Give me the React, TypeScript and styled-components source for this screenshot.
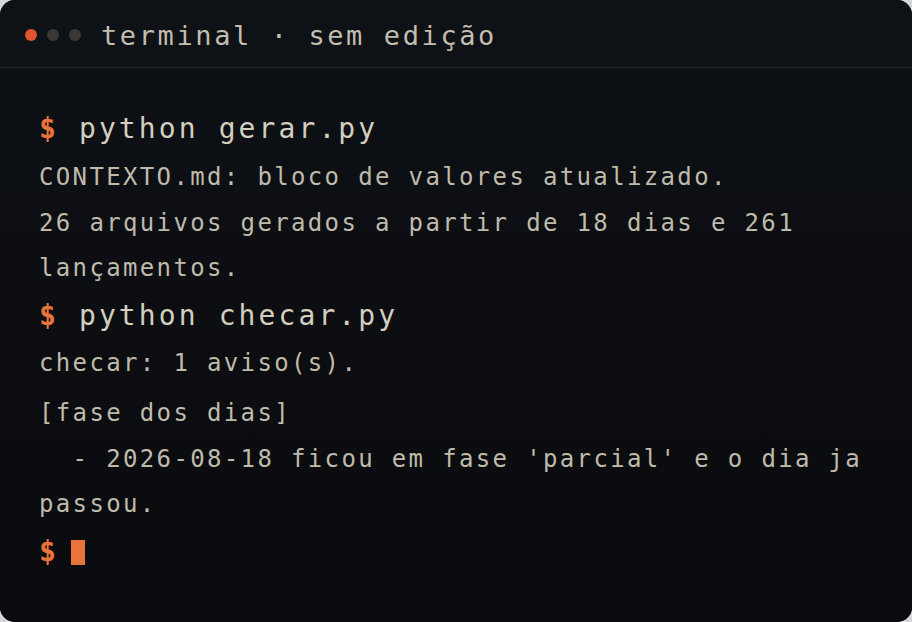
import React from "react";
import styled, { createGlobalStyle } from "styled-components";

const Global = createGlobalStyle`
  html, body { margin: 0; padding: 0; background: #d6d6d6; }
  body { width: 912px; height: 622px; overflow: hidden; }
  #root { width: 912px; height: 622px; }
`;

const Window = styled.div`
  width: 912px;
  height: 622px;
  box-sizing: border-box;
  border-radius: 15px;
  overflow: hidden;
  background: #0b0d11;
  display: flex;
  flex-direction: column;
  font-family: "DejaVu Sans Mono", "Liberation Mono", monospace;
`;

const TitleBar = styled.div`
  height: 68px;
  flex: 0 0 68px;
  box-sizing: border-box;
  display: flex;
  align-items: center;
  padding-left: 25px;
  background: #0e1115;
  border-bottom: 1px solid #22262b;
`;

const Dots = styled.div`
  display: flex;
  gap: 10px;
  margin-right: 20px;
  margin-top: 2px;
`;

const Dot = styled.span<{ $color: string }>`
  width: 12px;
  height: 12px;
  border-radius: 50%;
  background: ${(p) => p.$color};
`;

const Title = styled.div`
  font-size: 27px;
  letter-spacing: 2.6px;
  color: #c2bdae;
  line-height: 1;
  padding-top: 4px;
`;

const Screen = styled.div`
  flex: 1;
  display: flex;
  flex-direction: column;
  padding: 37px 40px 0 39px;
  background: linear-gradient(#0d1014, #0a0b0f);
`;

const Command = styled.div<{ $mt?: number }>`
  font-size: 28px;
  line-height: 48px;
  letter-spacing: 3.1px;
  color: #d3cebf;
  margin-top: ${(p) => p.$mt ?? 0}px;
  display: flex;
  align-items: center;
`;

const Prompt = styled.span`
  color: #e8743b;
  font-weight: bold;
`;

const Output = styled.div<{ $mt?: number }>`
  font-size: 24px;
  line-height: 45.5px;
  letter-spacing: 2.35px;
  color: #bfbaab;
  white-space: pre-wrap;
  margin-top: ${(p) => p.$mt ?? 0}px;
`;

const Cursor = styled.span`
  display: inline-block;
  width: 14px;
  height: 25px;
  background: #e8743b;
  margin-left: 12px;
  margin-top: 2px;
`;

export default function App() {
  return (
    <>
      <Global />
      <Window>
        <TitleBar>
          <Dots>
            <Dot $color="#e0552d" />
            <Dot $color="#3b3935" />
            <Dot $color="#3b3935" />
          </Dots>
          <Title>terminal · sem edição</Title>
        </TitleBar>
        <Screen>
          <Command>
            <span>
              <Prompt>$</Prompt> python gerar.py
            </span>
          </Command>
          <Output $mt={2}>CONTEXTO.md: bloco de valores atualizado.</Output>
          <Output>26 arquivos gerados a partir de 18 dias e 261 lançamentos.</Output>
          <Command>
            <span>
              <Prompt>$</Prompt> python checar.py
            </span>
          </Command>
          <Output $mt={1}>checar: 1 aviso(s).</Output>
          <Output $mt={5}>
            {"[fase dos dias]\n  - 2026-08-18 ficou em fase 'parcial' e o dia ja passou."}
          </Output>
          <Command $mt={0}>
            <Prompt>$</Prompt>
            <Cursor />
          </Command>
        </Screen>
      </Window>
    </>
  );
}
